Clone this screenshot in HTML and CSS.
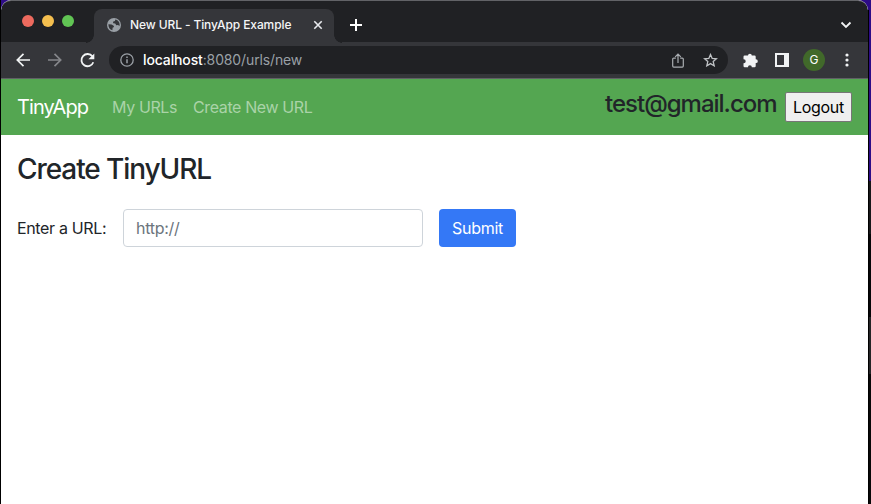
FILE: index.html
```
<!DOCTYPE html>
<html lang="en">
<head>
<meta charset="utf-8">
<title>New URL - TinyApp Example</title>
<link rel="stylesheet" href="styles.css">
</head>
<body>
<div class="window">
  <header class="tabbar">
    <div class="lights"><span class="light red"></span><span class="light yellow"></span><span class="light green"></span></div>
    <div class="tab">
      <svg class="globe" width="14" height="14" viewBox="0 0 14 14"><circle cx="7" cy="7" r="7" fill="#9aa0a6"/><path d="M1.400 6.200 4.600 6.500 6.700 7.700 7 9.100 5.600 9.700 5.400 12.300C2.700 11.600 1.300 9.200 1.400 6.200zM8.300 1.500 7.900 3.100 6 3.700 6.200 5.200 8.200 5.500 9.300 7.300 11 7.100 12.500 8.100C13.300 4.900 11.300 2.100 8.300 1.500z" fill="#35363a"/></svg>
      <span class="tab-title">New URL - TinyApp Example</span>
      <svg class="close" width="10" height="10" viewBox="0 0 10 10"><path d="M1.300 1.300 8.700 8.700M8.700 1.300 1.300 8.700" stroke="#e8eaed" stroke-width="1.600"/></svg>
    </div>
    <svg class="plus" width="12" height="12" viewBox="0 0 12 12"><path d="M6 0V12M0 6H12" stroke="#fff" stroke-width="2"/></svg>
    <svg class="chevron" width="12" height="8" viewBox="0 0 12 8"><path d="M1.500 1.500 6 5.900 10.500 1.500" fill="none" stroke="#f1f3f4" stroke-width="1.800"/></svg>
  </header>
  <div class="toolbar">
    <svg class="back" width="14" height="14" viewBox="0 0 14 14"><path d="M14 7H1.500M7.500.8 1.300 7l6.200 6.200" fill="none" stroke="#f1f3f4" stroke-width="1.700"/></svg>
    <svg class="forward" width="14" height="14" viewBox="0 0 14 14"><path d="M0 7H12.500M6.500.8 12.700 7l-6.200 6.200" fill="none" stroke="#85868a" stroke-width="1.700"/></svg>
    <svg class="reload" width="15" height="15" viewBox="0 0 15 15"><path d="M12.400 3.400A6.100 6.100 0 1 0 13.300 9.200" fill="none" stroke="#f1f3f4" stroke-width="1.800"/><path d="M14.300.4V6.300H8.400z" fill="#f1f3f4"/></svg>
    <div class="address">
      <svg class="info" width="14" height="14" viewBox="0 0 14 14"><circle cx="7" cy="7" r="6.200" fill="none" stroke="#9aa0a6" stroke-width="1.300"/><path d="M7 6.200V10.300M7 3.500V5" stroke="#9aa0a6" stroke-width="1.500"/></svg>
      <span class="url"><b>localhost</b>:8080/urls/new</span>
      <svg class="share" width="12" height="15" viewBox="0 0 12 15"><path d="M3.800 5.100H1.700a1 1 0 0 0-1 1v7a1 1 0 0 0 1 1h8.600a1 1 0 0 0 1-1v-7a1 1 0 0 0-1-1H8.200M6 10V1.300M3.200 3.900 6 1.100l2.800 2.800" fill="none" stroke="#a9adb1" stroke-width="1.200"/></svg>
      <svg class="star" width="15" height="14" viewBox="0 0 15 14"><path d="M7.500 1.500 9.200 5.400 13.400 5.800 10.200 8.600 11.200 12.800 7.500 10.600 3.800 12.800 4.800 8.600 1.600 5.800 5.800 5.400z" fill="none" stroke="#bfc2c5" stroke-width="1.300"/></svg>
    </div>
    <svg class="puzzle" width="15" height="15" viewBox="0 0 15 15"><path d="M5 2.600a1.900 1.900 0 0 1 3.800 0h2.700A1.200 1.200 0 0 1 12.700 3.800V6.300h.2a1.900 1.900 0 0 1 0 3.800h-.2v2.900a1.200 1.200 0 0 1-1.200 1.200H8.800v-.1a1.900 1.900 0 0 0-3.800 0v.1H1.700A1.200 1.200 0 0 1 .5 13V10.200h.2a2 2 0 0 0 0-4H.5V3.800A1.200 1.200 0 0 1 1.700 2.600z" fill="#f1f3f4"/></svg>
    <svg class="panel" width="14" height="14" viewBox="0 0 14 14"><path fill-rule="evenodd" d="M0 0H14V14H0zM2 2V12H9V2z" fill="#f1f3f4"/></svg>
    <span class="avatar">G</span>
    <svg class="dots" width="4" height="14" viewBox="0 0 4 14"><g fill="#f1f3f4"><circle cx="2" cy="2" r="1.600"/><circle cx="2" cy="7" r="1.600"/><circle cx="2" cy="12" r="1.600"/></g></svg>
  </div>
  <nav class="navbar">
    <a class="brand">TinyApp</a>
    <a class="link urls">My URLs</a>
    <a class="link create">Create New URL</a>
    <div class="account"><span class="email">test@gmail.com</span><button class="logout">Logout</button></div>
  </nav>
  <main>
    <h3>Create TinyURL</h3>
    <form class="form">
      <label for="url">Enter a URL:</label>
      <input id="url" type="text" placeholder="http://">
      <button class="submit" type="button">Submit</button>
    </form>
  </main>
</div>
</body>
</html>
```
FILE: styles.css
```
* { box-sizing: border-box; }
body {
  margin: 0;
  height: 504px;
  overflow: hidden;
  padding: 0 3px 0 1px;
  background: linear-gradient(#000, #000) left / 1px 100% no-repeat,
    linear-gradient(#000, #000) 868px 10px / 1px 100% no-repeat,
    linear-gradient(#2d0b86 0 181px, #17171a 181px 234px, #060608 234px 317px, #242426 317px 374px, #080808 374px);
  font-family: Inter, "Liberation Sans", sans-serif;
  font-size: 16px;
  color: #212529;
}
svg { display: block; flex: none; }
button, input { font: inherit; margin: 0; letter-spacing: -0.3px; }
.window { width: 867px; height: 504px; background: #fff; border-radius: 10px 10px 0 0; overflow: hidden; white-space: nowrap; }
.tabbar { display: flex; align-items: center; height: 42px; padding: 8px 17px 0 21px; background: #202124; border-top: 1px solid #626367; border-radius: 10px 10px 0 0; }
.lights { display: flex; gap: 8px; width: 72px; height: 12px; margin-top: -9px; }
.light { width: 12px; height: 12px; border-radius: 50%; }
.red { background: #ed6a5e; }
.yellow { background: #f5bf4f; }
.green { background: #61c554; }
.tab { position: relative; display: flex; align-items: center; width: 240px; height: 34px; padding: 0 11px 0 13px; background: #35363a; border-radius: 8px 8px 0 0; }
.tab::before, .tab::after { content: ""; position: absolute; bottom: 0; width: 8px; height: 8px; }
.tab::before { left: -8px; background: radial-gradient(circle at 0 0, #202124 7.5px, #35363a 8px); }
.tab::after { right: -8px; background: radial-gradient(circle at 100% 0, #202124 7.5px, #35363a 8px); }
.globe, .close { margin-top: -1px; }
.tab-title { margin-left: 9px; margin-top: -2px; font-size: 12px; font-weight: 500; letter-spacing: -0.1px; color: #f4f5f6; }
.close { margin-left: auto; }
.plus { margin-left: 16px; margin-top: -1px; }
.chevron { margin-left: auto; margin-right: -1px; margin-top: -1px; }
.toolbar { display: flex; align-items: center; height: 37px; padding-left: 15px; background: #35363a; border-bottom: 1px solid #606165; }
.forward { margin-left: 18px; }
.reload { margin-left: 18px; }
.address { display: flex; align-items: center; width: 619px; height: 28px; margin-left: 14px; padding: 0 10px 0 11px; border-radius: 14px; background: #202124; }
.url { width: 160px; margin-left: 9px; margin-top: -1px; font-size: 14px; letter-spacing: -0.13px; color: #9aa0a6; }
.url b { font-weight: 500; color: #fff; }
.share { margin-left: auto; }
.star { margin-left: 19px; }
.puzzle { margin-left: 15px; }
.panel { margin-left: 17px; }
.avatar { width: 22px; height: 22px; margin-left: 14px; border-radius: 50%; background: #41692a; color: #fff; font-size: 12px; line-height: 22px; text-align: center; }
.dots { margin-left: 20px; }
.navbar { display: flex; align-items: center; height: 56px; padding: 0 16px; background: #54a651; }
.brand { width: 95px; font-size: 20px; letter-spacing: -0.9px; color: #fff; }
.link { color: #aad3a8; letter-spacing: -0.38px; }
.urls { width: 81px; }
.account { display: flex; align-items: center; margin-left: auto; }
.email { width: 180px; margin-top: -8px; font-size: 24px; font-weight: 500; letter-spacing: -1px; }
.logout { width: 67px; height: 30px; padding: 0; border: 1px solid #767676; border-radius: 2px; background: #efefef; color: #000; }
main { padding: 16px; }
h3 { margin: 0 0 23px; padding-top: 1px; font-size: 28px; line-height: 34px; font-weight: 500; letter-spacing: -1.08px; }
.form { display: flex; align-items: center; }
label { width: 106px; letter-spacing: -0.35px; }
input { width: 300px; height: 38px; padding: 6px 12px; border: 1px solid #ced4da; border-radius: 4px; color: #495057; }
input::placeholder { color: #6c757d; opacity: 1; }
.submit { width: 77px; height: 38px; margin-left: 16px; padding: 0; border: 0; border-radius: 4px; background: #3478f6; color: #fff; }
```
